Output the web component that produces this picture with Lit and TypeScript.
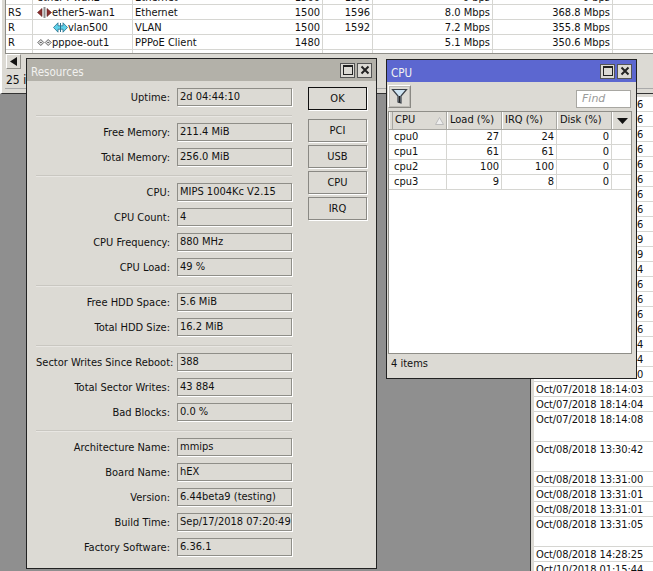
import { LitElement, html, css } from "lit";
import { customElement } from "lit/decorators.js";

const ethIcon = html`<svg class="ico" viewBox="0 0 15 11" width="15" height="11"><path d="M0.5 5.5 5 1.5V9.5Z M14.5 5.5 10 1.5V9.5Z" fill="#8c2f2f" stroke="#5a1c1c" stroke-width=".6"/><path d="M7.5 0V11" stroke="#8d8d8d" stroke-width="2"/></svg>`;
const vlanIcon = html`<svg class="ico" viewBox="0 0 15 11" width="15" height="11"><path d="M0.5 5.5 5 .8V3.8H10V.8L14.5 5.5 10 10.2V7.2H5V10.2Z" fill="#5fd2ea" stroke="#2a6f8c" stroke-width=".8"/><path d="M7.5 1V10" stroke="#2a6f8c" stroke-width="1"/></svg>`;
const pppIcon = html`<svg class="ico" viewBox="0 0 15 11" width="15" height="11"><path d="M.8 5.5 3.8 2.5 6.8 5.5 3.8 8.5Z M8.2 5.5 11.2 2.5 14.2 5.5 11.2 8.5Z" fill="#e4e4e4" stroke="#555" stroke-width=".9"/><path d="M2.8 5.5H4.8M10.2 5.5H12.2" stroke="#666" stroke-width="1"/></svg>`;

const topRows = [
  ["", "ether4-wan2", "Ethernet", "1500", "1596", "0 bps", "0 bps", 0, null],
  ["RS", "ether5-wan1", "Ethernet", "1500", "1596", "8.0 Mbps", "368.8 Mbps", 0, ethIcon],
  ["R", "vlan500", "VLAN", "1500", "1592", "7.2 Mbps", "355.8 Mbps", 1, vlanIcon],
  ["R", "pppoe-out1", "PPPoE Client", "1480", "", "5.1 Mbps", "350.6 Mbps", 0, pppIcon],
  ["", "pppoe-out2", "PPPoE Client", "1480", "", "0 bps", "0 bps", 0, pppIcon],
] as const;

type Group = [string, string][];
const groups: Group[] = [
  [["Uptime:", "2d 04:44:10"]],
  [["Free Memory:", "211.4 MiB"], ["Total Memory:", "256.0 MiB"]],
  [["CPU:", "MIPS 1004Kc V2.15"], ["CPU Count:", "4"], ["CPU Frequency:", "880 MHz"], ["CPU Load:", "49 %"]],
  [["Free HDD Space:", "5.6 MiB"], ["Total HDD Size:", "16.2 MiB"]],
  [["Sector Writes Since Reboot:", "388"], ["Total Sector Writes:", "43 884"], ["Bad Blocks:", "0.0 %"]],
  [["Architecture Name:", "mmips"], ["Board Name:", "hEX"], ["Version:", "6.44beta9 (testing)"], ["Build Time:", "Sep/17/2018 07:20:49"], ["Factory Software:", "6.36.1"]],
];

const lastDigits = ["6", "6", "6", "6", "6", "6", "6", "6", "6", "9", "9", "4", "6", "6", "6", "6", "4", "4", "0"];
const logRows: [string, number][] = [
  ...lastDigits.map((d, i) => [`Oct/07/2018 18:13:${i < 9 ? 1 : 5}${d}`, 1] as [string, number]),
  ["Oct/07/2018 18:14:03", 1],
  ["Oct/07/2018 18:14:04", 1],
  ["Oct/07/2018 18:14:08", 2],
  ["Oct/08/2018 13:30:42", 2],
  ["Oct/08/2018 13:31:00", 1],
  ["Oct/08/2018 13:31:01", 1],
  ["Oct/08/2018 13:31:01", 1],
  ["Oct/08/2018 13:31:05", 2],
  ["Oct/08/2018 14:28:25", 1],
  ["Oct/10/2018 01:15:44", 1],
];

const cpuRows = [
  ["cpu0", "27", "24", "0"],
  ["cpu1", "61", "61", "0"],
  ["cpu2", "100", "100", "0"],
  ["cpu3", "9", "8", "0"],
];

const winBtns = html`<div class="wbtns">
  <span class="wbtn"><svg width="14" height="14" viewBox="0 0 14 14"><rect x="2.5" y="2.5" width="9" height="9" fill="none" stroke="#222" stroke-width="1"/><path d="M2 3H12" stroke="#222" stroke-width="2"/></svg></span>
  <span class="wbtn"><svg width="14" height="14" viewBox="0 0 14 14"><path d="M3.5 3.5 10.5 10.5M10.5 3.5 3.5 10.5" stroke="#222" stroke-width="2"/></svg></span>
</div>`;

@customElement("app-root")
export class AppRoot extends LitElement {
  static styles = css`
    :host {
      display: block;
      position: relative;
      width: 653px;
      height: 571px;
      overflow: hidden;
      background: #8f8f8f;
      font-family: "DejaVu Sans Condensed", "DejaVu Sans", sans-serif;
      font-size: 11px;
      color: #111;
    }
    .win { position: absolute; box-sizing: border-box; }

    /* background interfaces window */
    .main {
      left: 0; top: -10px; width: 720px; height: 104px;
      background: #dcdad4;
      border-bottom: 1px solid #333;
      border-left: 2px solid #fff;
      padding-left: 3px;
      display: flex;
      flex-direction: column;
    }
    .ttable { height: 63px; overflow: hidden; background: #fff; border-left: 1px solid #8f8e88; flex: none; }
    .trow { display: grid; grid-template-columns: 27px 100px 190px 50px 120px 120px 1fr; height: 15px; box-sizing: border-box; border-bottom: 1px solid #d6d6d2; line-height: 14px; }
    .trow > div { border-right: 1px solid #d6d6d2; padding: 1px 2px 0; white-space: nowrap; overflow: hidden; }
    .trow .r { text-align: right; }
    .trow .split { display: flex; justify-content: space-between; }
    .trow .name { display: flex; align-items: center; padding: 0 0 0 4px; }
    .trow .name span { padding-top: 1px; }
    .trow .name.sub { padding-left: 20px; }
    .ico { flex: none; }
    .sbar { flex: none; height: 16px; border-top: 1px solid #8f8e88; display: flex; }
    .sbtn { width: 15px; height: 15px; box-sizing: border-box; margin-left: 1px; border: 1px solid #fff; border-right-color: #8f8e88; border-bottom-color: #8f8e88; display: flex; align-items: center; justify-content: center; }
    .mstatus { flex: none; height: 19px; line-height: 20px; padding-left: 1px; font-size: 12px; border-bottom: 1px solid #aaa; box-sizing: border-box; overflow: hidden; }

    /* background log window */
    .log {
      left: 530px; top: 94px; width: 140px; height: 490px;
      background: #dcdad4;
      border-left: 1px solid #333;
      padding: 3px 0 0 3px;
    }
    .ltable { background: #fff; height: 100%; overflow: hidden; }
    .lrow { height: 15px; box-sizing: border-box; border-bottom: 1px solid #d6d6d2; line-height: 14px; padding: 1px 0 0 2px; white-space: nowrap; letter-spacing: -0.1px; }
    .lrow.tall { height: 30px; }

    /* Resources */
    .res {
      left: 26px; top: 58px; width: 351px; height: 511px;
      background: #dcdad4;
      border: 1px solid #222;
      display: flex;
      flex-direction: column;
    }
    .title {
      flex: none; height: 22px; display: flex; align-items: center; justify-content: space-between;
      padding: 0 4px; color: #f2f2f0; font-size: 11.5px;
    }
    .title > span { padding-top: 4px; }
    .res .title { background: #b3b1a9; }
    .cpu .title { background: #5c67d0; }
    .wbtns { display: flex; gap: 2px; }
    .wbtn { width: 15px; height: 15px; box-sizing: border-box; background: #dcdad4; border: 1px solid #555; display: flex; align-items: center; justify-content: center; }
    .wbtn svg { flex: none; }
    .resbody { display: flex; padding: 7px 0 0 9px; gap: 16px; }
    .form { width: 256px; }
    .row { display: grid; grid-template-columns: 134px 115px; column-gap: 7px; height: 19px; align-items: center; }
    .row + .row { margin-top: 6px; }
    .lbl { text-align: right; white-space: nowrap; }
    .fld { height: 18px; box-sizing: border-box; border: 1px solid #8f8e88; box-shadow: 1px 1px 0 #fff; line-height: 16px; padding-left: 2px; white-space: nowrap; overflow: hidden; align-self: start; }
    .sep { height: 1px; background: #c9c7c1; margin: 8px 0 7px; box-shadow: 0 1px 0 #e8e6e2; }
    .btns { display: flex; flex-direction: column; width: 59px; margin-top: -1px; }
    .btn { height: 23px; box-sizing: border-box; border: 1px solid #8a8984; box-shadow: 1px 1px 0 #fff; text-align: center; line-height: 21px; margin-bottom: 3px; }
    .btn.def { border-color: #111; margin-bottom: 9px; }

    /* CPU */
    .cpu {
      left: 386px; top: 59px; width: 251px; height: 320px;
      background: #dcdad4;
      border: 1px solid #222;
      display: flex;
      flex-direction: column;
    }
    .toolbar { flex: none; height: 29px; display: flex; align-items: flex-start; justify-content: space-between; padding: 3px 5px 0 1px; box-sizing: border-box; }
    .filter { width: 23px; height: 23px; box-sizing: border-box; border: 1px solid; border-color: #fff #8a8984 #8a8984 #fff; outline: 1px solid #bdbbb5; outline-offset: -2px; display: flex; align-items: center; justify-content: center; }
    .find { width: 55px; height: 18px; margin-top: 5px; box-sizing: border-box; background: #fff; border: 1px solid #a8a7a2; color: #9a9a9a; font-style: italic; padding-left: 5px; line-height: 16px; font-family: "DejaVu Sans", sans-serif; }
    .ctable { flex: none; height: 243px; margin: 0 4px 0 1px; box-sizing: border-box; border: 1px solid #8f8e88; background: #fff; }
    .chead, .crow { display: grid; grid-template-columns: 58px 55px 55px 55px 1fr; }
    .chead { height: 17px; background: #dcdad4; border-bottom: 1px solid #a8a7a2; line-height: 16px; }
    .chead > div { border-right: 1px solid #a8a7a2; border-left: 1px solid #fff; padding-left: 2px; position: relative; white-space: nowrap; overflow: hidden; }
    .chead > div:first-child { padding-left: 5px; }
    .chead > div:first-child::before { content: ""; position: absolute; left: 2px; top: 0; bottom: 0; width: 1px; background: #a8a7a2; }
    .chead > div:last-child { border-right: 0; display: flex; align-items: center; justify-content: center; padding: 0; }
    .crow { height: 15px; box-sizing: border-box; border-bottom: 1px solid #d6d6d2; line-height: 14px; }
    .crow > div { border-right: 1px solid #d6d6d2; padding: 0 2px; text-align: right; }
    .crow > div:first-child { text-align: left; padding-left: 5px; }
    .crow > div:last-child { border-right: 0; }
    .sort { position: absolute; right: 2px; top: 5px; }
    .cstatus { flex: 1; line-height: 20px; padding: 0 0 0 4px; }
  `;

  render() {
    return html`
      <div class="win log">
        <div class="ltable">
          ${logRows.map(([t, n]) => html`<div class="lrow ${n === 2 ? "tall" : ""}">${t}</div>`)}
        </div>
      </div>

      <div class="win main">
        <div class="ttable">
          ${topRows.map((r) => html`<div class="trow">
            <div>${r[0]}</div>
            <div class="name ${r[7] ? "sub" : ""}">${r[8]}<span>${r[1]}</span></div>
            <div class="split"><span>${r[2]}</span><span>${r[3]}</span></div>
            <div class="r">${r[4]}</div>
            <div class="r">${r[5]}</div>
            <div class="r">${r[6]}</div>
            <div></div>
          </div>`)}
        </div>
        <div class="sbar"><div class="sbtn"><svg width="9" height="9" viewBox="0 0 9 9"><path d="M8 0V9L1 4.5Z" fill="#111"/></svg></div></div>
        <div class="mstatus">25 items</div>
      </div>

      <div class="win res">
        <div class="title"><span>Resources</span>${winBtns}</div>
        <div class="resbody">
          <div class="form">
            ${groups.map((g, i) => html`
              ${i ? html`<div class="sep"></div>` : ""}
              ${g.map(([l, v]) => html`<div class="row"><div class="lbl">${l}</div><div class="fld">${v}</div></div>`)}
            `)}
          </div>
          <div class="btns">
            <div class="btn def">OK</div>
            <div class="btn">PCI</div>
            <div class="btn">USB</div>
            <div class="btn">CPU</div>
            <div class="btn">IRQ</div>
          </div>
        </div>
      </div>

      <div class="win cpu">
        <div class="title"><span>CPU</span>${winBtns}</div>
        <div class="toolbar">
          <div class="filter"><svg width="17" height="17" viewBox="0 0 17 17"><path d="M1.5 1.5H15.5L10 8V15L7 14V8Z" fill="#cfe4f2" stroke="#3a4048" stroke-width="1.2"/><path d="M8.5 8V14.5" stroke="#222" stroke-width="1.6"/></svg></div>
          <div class="find">Find</div>
        </div>
        <div class="ctable">
          <div class="chead">
            <div>CPU<svg class="sort" width="9" height="8" viewBox="0 0 9 8"><path d="M4.5 .5 8.5 7.5H.5Z" fill="#eee" stroke="#bbb"/></svg></div>
            <div>Load (%)</div>
            <div>IRQ (%)</div>
            <div>Disk (%)</div>
            <div><svg width="11" height="6" viewBox="0 0 11 6"><path d="M0 0H11L5.5 6Z" fill="#111"/></svg></div>
          </div>
          ${cpuRows.map((r) => html`<div class="crow"><div>${r[0]}</div><div>${r[1]}</div><div>${r[2]}</div><div>${r[3]}</div><div></div></div>`)}
        </div>
        <div class="cstatus">4 items</div>
      </div>
    `;
  }
}
